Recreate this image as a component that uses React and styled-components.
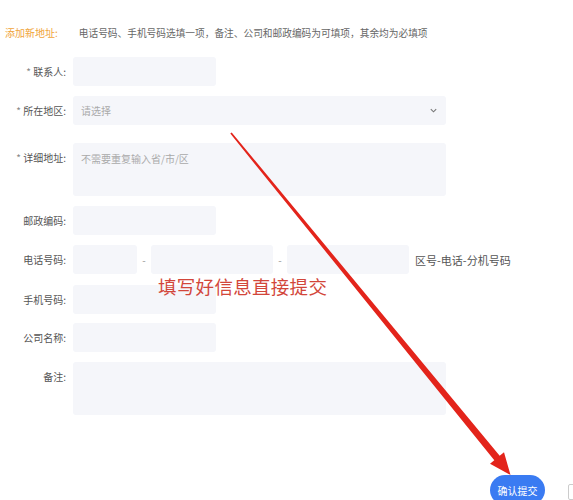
import React from "react";
import styled, { createGlobalStyle } from "styled-components";

const GlobalStyle = createGlobalStyle`
  html, body {
    margin: 0;
    padding: 0;
    background: #ffffff;
    font-family: "Noto Sans CJK SC", "Noto Sans", sans-serif;
  }
`;

const Page = styled.div`
  position: relative;
  width: 573px;
  height: 500px;
  overflow: hidden;
  background: #fff;
`;

const Form = styled.div`
  padding: 25px 0 0 5px;
  display: flex;
  flex-direction: column;
`;

const Notice = styled.div`
  display: flex;
  align-items: center;
  gap: 21px;
  font-size: 10px;
  line-height: 16px;
  margin-bottom: 16px;
`;

const NoticeTitle = styled.span`
  color: #f0a43a;
`;

const NoticeText = styled.span`
  color: #666;
  font-size: 9.7px;
`;

const Row = styled.div`
  display: flex;
  align-items: ${(p) => (p.$top ? "flex-start" : "center")};
  gap: 7px;
  margin-bottom: ${(p) => p.$mb ?? 10}px;
`;

const Label = styled.label`
  width: 61px;
  flex-shrink: 0;
  text-align: right;
  font-size: 10px;
  color: #555;
  padding-top: ${(p) => (p.$top ? "7px" : "0")};
  white-space: nowrap;

  &::before {
    content: ${(p) => (p.$req ? '"* "' : '""')};
    color: #888;
  }
`;

const Field = styled.div`
  width: ${(p) => p.$w}px;
  height: ${(p) => p.$h || 29}px;
  background: #f5f6fa;
  border-radius: 3px;
  box-sizing: border-box;
  padding: ${(p) => (p.$area ? "8px 8px" : "0 8px")};
  display: flex;
  align-items: ${(p) => (p.$area ? "flex-start" : "center")};
  justify-content: space-between;
  font-size: 10px;
  color: #aaa;
`;

const Dash = styled.span`
  width: 14px;
  text-align: center;
  font-size: 10px;
  color: #999;
`;

const PhoneGroup = styled.div`
  display: flex;
  align-items: center;
`;

const Hint = styled.span`
  margin-left: 6px;
  font-size: 11px;
  color: #555;
`;

const Footer = styled.div`
  display: flex;
  justify-content: flex-end;
  padding-right: 28px;
  margin-top: 50px;
`;

const SubmitButton = styled.button`
  width: 55px;
  height: 30px;
  border: none;
  border-radius: 15px;
  background: #3a7bf2;
  color: #fff;
  font-family: inherit;
  font-size: 10px;
  padding: 0;
`;

const EdgeMark = styled.div`
  position: absolute;
  right: -2px;
  bottom: 0;
  width: 5px;
  height: 14px;
  border: 1px solid #ccc;
  border-radius: 2px;
`;

const Annotation = styled.div`
  position: absolute;
  left: 158px;
  top: 274px;
  font-size: 18.5px;
  line-height: 24px;
  color: #d2463a;
  letter-spacing: 0.3px;
`;

const ArrowLayer = styled.svg`
  position: absolute;
  left: 0;
  top: 0;
  pointer-events: none;
`;

const Chevron = () => (
  <svg width="9" height="9" viewBox="0 0 10 10">
    <path d="M2 3.5 L5 6.5 L8 3.5" fill="none" stroke="#777" strokeWidth="1.2" />
  </svg>
);

export default function App() {
  return (
    <Page>
      <GlobalStyle />
      <Form>
        <Notice>
          <NoticeTitle>添加新地址:</NoticeTitle>
          <NoticeText>电话号码、手机号码选填一项，备注、公司和邮政编码为可填项，其余均为必填项</NoticeText>
        </Notice>

        <Row>
          <Label $req>联系人:</Label>
          <Field $w={143} />
        </Row>

        <Row $mb={18}>
          <Label $req>所在地区:</Label>
          <Field $w={373}>
            <span>请选择</span>
            <Chevron />
          </Field>
        </Row>

        <Row $top>
          <Label $req $top>详细地址:</Label>
          <Field $w={373} $h={53} $area>
            不需要重复输入省/市/区
          </Field>
        </Row>

        <Row>
          <Label>邮政编码:</Label>
          <Field $w={143} />
        </Row>

        <Row $mb={11}>
          <Label>电话号码:</Label>
          <PhoneGroup>
            <Field $w={64} />
            <Dash>-</Dash>
            <Field $w={122} />
            <Dash>-</Dash>
            <Field $w={122} />
            <Hint>区号-电话-分机号码</Hint>
          </PhoneGroup>
        </Row>

        <Row $mb={9}>
          <Label>手机号码:</Label>
          <Field $w={143} />
        </Row>

        <Row>
          <Label>公司名称:</Label>
          <Field $w={143} />
        </Row>

        <Row $top>
          <Label $top>备注:</Label>
          <Field $w={373} $h={53} $area />
        </Row>

        <Footer>
          <SubmitButton>确认提交</SubmitButton>
        </Footer>
      </Form>

      <Annotation>填写好信息直接提交</Annotation>

      <ArrowLayer width="573" height="500" viewBox="0 0 573 500">
        <polygon
          points="230.3,133.6 494.3,460.2 490,463.7 510.5,475 504,452.3 499.7,455.8 231.7,132.4"
          fill="#e3241b"
        />
      </ArrowLayer>
      <EdgeMark />
    </Page>
  );
}
